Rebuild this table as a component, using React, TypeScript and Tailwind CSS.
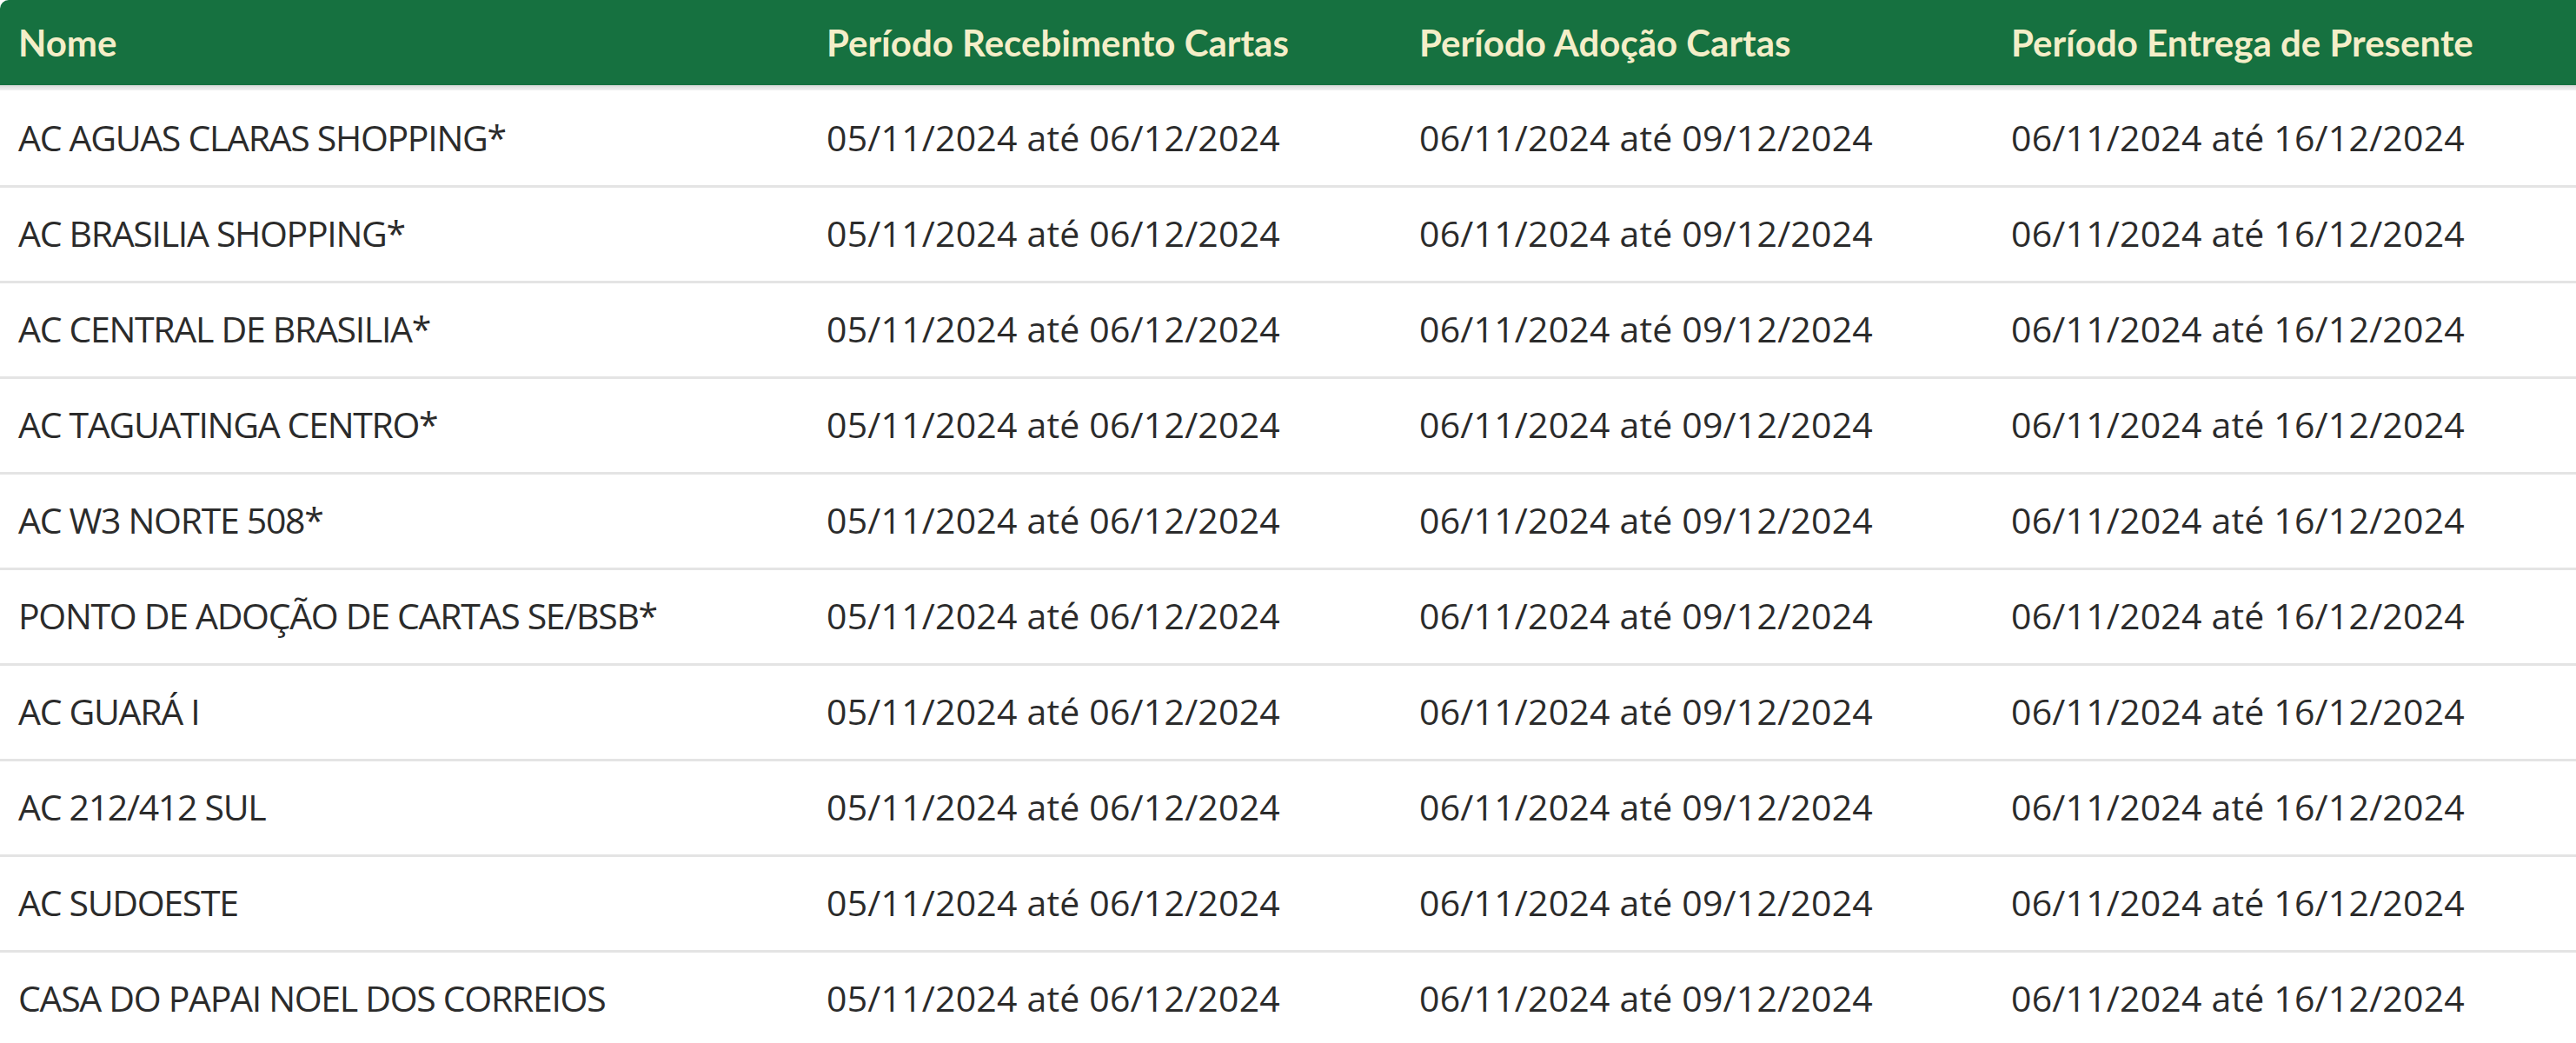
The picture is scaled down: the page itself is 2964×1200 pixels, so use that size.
import React from "react";

const rows = [
  "AC AGUAS CLARAS SHOPPING*",
  "AC BRASILIA SHOPPING*",
  "AC CENTRAL DE BRASILIA*",
  "AC TAGUATINGA CENTRO*",
  "AC W3 NORTE 508*",
  "PONTO DE ADOÇÃO DE CARTAS SE/BSB*",
  "AC GUARÁ I",
  "AC 212/412 SUL",
  "AC SUDOESTE",
  "CASA DO PAPAI NOEL DOS CORREIOS",
];

export default function App() {
  return (
    <div className="w-[2964px] h-[1200px] overflow-hidden bg-white font-['Open_Sans',sans-serif] text-[41px] text-[#2b2b2b]">
      <table className="w-full border-collapse table-fixed">
        <colgroup>
          <col className="w-[951px]" />
          <col className="w-[682px]" />
          <col className="w-[681px]" />
          <col />
        </colgroup>
        <thead>
          <tr className="bg-[#167140] text-[#f4eec8] text-left font-['Lato',sans-serif] text-[42px]">
            <th className="h-[98px] pl-[21px] rounded-tl-[10px] font-bold">Nome</th>
            <th className="font-bold">Período Recebimento Cartas</th>
            <th className="font-bold">Período Adoção Cartas</th>
            <th className="font-bold">Período Entrega de Presente</th>
          </tr>
        </thead>
        <tbody>
          <tr className="h-[6px]">
            <td colSpan={4} className="p-0 bg-gradient-to-b from-[#d9d9d9] to-[#f2f2f2]" />
          </tr>
          {rows.map((name) => (
            <tr key={name} className="h-[110px] border-b-[3px] border-[#e4e4e4]">
              <td className="pl-[21px] tracking-[-1.3px]">{name}</td>
              <td className="tracking-[0.2px]">05/11/2024 até 06/12/2024</td>
              <td className="tracking-[0.2px]">06/11/2024 até 09/12/2024</td>
              <td className="tracking-[0.2px]">06/11/2024 até 16/12/2024</td>
            </tr>
          ))}
        </tbody>
      </table>
    </div>
  );
}
